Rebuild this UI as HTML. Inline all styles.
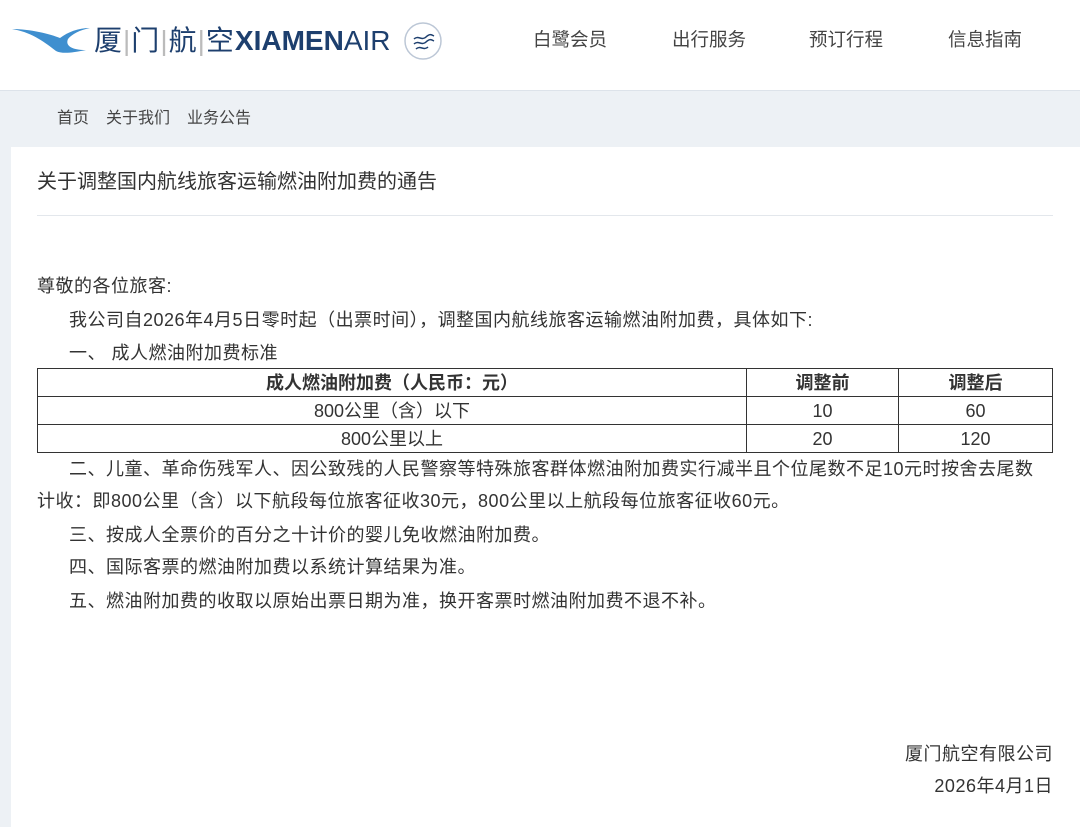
<!DOCTYPE html>
<html><head><meta charset="utf-8"><style>
*{margin:0;padding:0;box-sizing:border-box}
body{width:1080px;height:811px;overflow:hidden;background:#edf1f5;font-family:"Liberation Sans","Noto Sans CJK SC",sans-serif;color:#333;position:relative}
.hdr{position:absolute;left:0;top:0;width:1080px;height:91px;background:#fff;border-bottom:1px solid #dde3ea}
.nav{position:absolute;top:27px;font-size:18.5px;color:#444;line-height:26px}
.bc{position:absolute;top:108px;left:57px;font-size:16px;color:#444;line-height:22px}
.bc span{margin-right:17px}
.box{position:absolute;left:11px;top:147px;width:1080px;height:680px;background:#fff}
.t{position:absolute;font-size:18px;line-height:24px;white-space:nowrap;letter-spacing:0.5px}
table{position:absolute;left:37px;top:368px;width:1016px;border-collapse:collapse;font-size:18px}
td{border:1px solid #333;height:28px;text-align:center;padding:0;line-height:26px}
</style></head><body>
<div class="hdr">
<svg style="position:absolute;left:10px;top:26px" width="80" height="30" viewBox="0 0 80 30"><path d="M2 3 C20 6 32 14 46 25 C52 28 62 27 76 24 C62 24 55 20 58 13 C62 8 70 4 80 2 C68 2 58 6 50 12 C40 8 20 3 2 3Z" fill="#3f8fcf"/></svg>
<div style="position:absolute;left:94px;top:24px;font-size:28px;line-height:34px;color:#1d3f6e;letter-spacing:1px;white-space:nowrap">厦<span style="color:#bbb;font-weight:100">|</span>门<span style="color:#bbb">|</span>航<span style="color:#bbb">|</span>空<b style="font-weight:bold;letter-spacing:0">XIAMEN</b><span style="letter-spacing:0">AIR</span></div>
<svg style="position:absolute;left:402px;top:20px" width="42" height="42" viewBox="0 0 42 42"><circle cx="21" cy="21" r="18" fill="none" stroke="#bcc7d6" stroke-width="1.5"/><path d="M12 24c4-4 8 2 12-2s6-2 8-1M12 19c4-4 8 2 12-2s6-2 8-1M14 29c4-4 8 2 12-2" fill="none" stroke="#1d3f6e" stroke-width="1.5"/></svg>
<div class="nav" style="left:533px">白鹭会员</div>
<div class="nav" style="left:672px">出行服务</div>
<div class="nav" style="left:809px">预订行程</div>
<div class="nav" style="left:948px">信息指南</div>
</div>
<div class="bc"><span>首页</span><span>关于我们</span><span>业务公告</span></div>
<div class="box"></div>
<div class="t" style="left:37px;top:169px;font-size:20px;line-height:26px;color:#333;letter-spacing:0">关于调整国内航线旅客运输燃油附加费的通告</div>
<div style="position:absolute;left:37px;top:215px;width:1016px;height:1px;background:#e3e7ec"></div>
<div class="t" style="left:37px;top:274px">尊敬的各位旅客:</div>
<div class="t" style="left:69px;top:308px">我公司自2026年4月5日零时起（出票时间），调整国内航线旅客运输燃油附加费，具体如下:</div>
<div class="t" style="left:69px;top:341px">一、 成人燃油附加费标准</div>
<table>
<tr><td style="width:709px;font-weight:bold">成人燃油附加费（人民币：元）</td><td style="width:152px;font-weight:bold">调整前</td><td style="font-weight:bold">调整后</td></tr>
<tr><td>800公里（含）以下</td><td>10</td><td>60</td></tr>
<tr><td>800公里以上</td><td>20</td><td>120</td></tr>
</table>
<div class="t" style="left:69px;top:457px">二、儿童、革命伤残军人、因公致残的人民警察等特殊旅客群体燃油附加费实行减半且个位尾数不足10元时按舍去尾数</div>
<div class="t" style="left:37px;top:489px">计收：即800公里（含）以下航段每位旅客征收30元，800公里以上航段每位旅客征收60元。</div>
<div class="t" style="left:69px;top:523px">三、按成人全票价的百分之十计价的婴儿免收燃油附加费。</div>
<div class="t" style="left:69px;top:555px">四、国际客票的燃油附加费以系统计算结果为准。</div>
<div class="t" style="left:69px;top:589px">五、燃油附加费的收取以原始出票日期为准，换开客票时燃油附加费不退不补。</div>
<div class="t" style="right:27px;top:742px">厦门航空有限公司</div>
<div class="t" style="right:27px;top:774px">2026年4月1日</div>
</body></html>
